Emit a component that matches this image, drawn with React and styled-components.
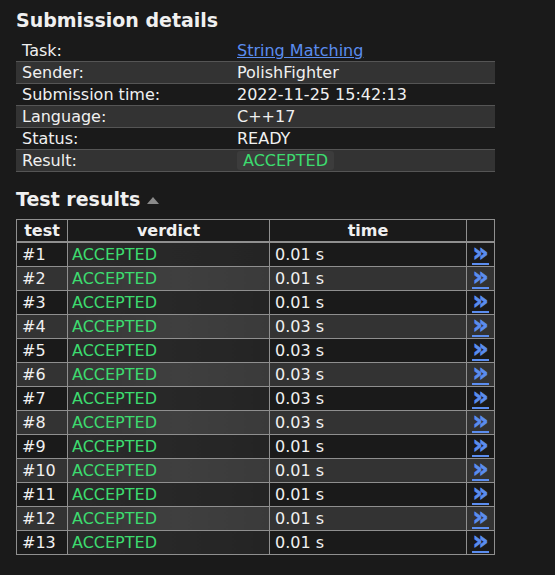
import React from "react";
import styled, { createGlobalStyle } from "styled-components";

const GlobalStyle = createGlobalStyle`
  html, body {
    margin: 0;
    background: #1a1a1a;
    color: #f0f0f0;
    font-family: "DejaVu Sans", Verdana, sans-serif;
    font-size: 16px;
  }
`;

const Page = styled.div`
  padding: 8px 16px 0 16px;
  height: 575px;
  overflow: hidden;
  box-sizing: border-box;
`;

const Heading = styled.h3`
  font-size: 19px;
  font-weight: bold;
  margin: 0 0 8px 0;
  line-height: 24px;
  display: flex;
  align-items: center;
  gap: 7px;
`;

const Arrow = styled.span`
  width: 0;
  height: 0;
  border-left: 6px solid transparent;
  border-right: 6px solid transparent;
  border-bottom: 7px solid #8a8a8a;
  margin-top: 2px;
`;

const DetailsTable = styled.table`
  width: 479px;
  border-collapse: collapse;
  margin-bottom: 15px;
`;

const DetailRow = styled.tr`
  background: ${(p) => (p.$even ? "#333333" : "transparent")};
  border-bottom: 1px solid #555555;
`;

const DetailCell = styled.td`
  padding: 0 6px;
  height: 21px;
  line-height: 21px;
  width: ${(p) => p.$w || "auto"};
`;

const TaskLink = styled.a`
  color: #5b8def;
  text-decoration: underline;
`;

const Badge = styled.span`
  display: inline-block;
  background: #3c3c3c;
  color: #3ddc6f;
  border-radius: 3px;
  padding: 0 6px;
  line-height: 19px;
`;

const ResultsTable = styled.table`
  width: 479px;
  border-collapse: collapse;
  border: 1px solid #8f8f8f;
  margin-bottom: 19px;
`;

const HeadCell = styled.th`
  border: 1px solid #8f8f8f;
  border-bottom: 2px solid #8f8f8f;
  height: 21px;
  line-height: 21px;
  padding: 0;
  font-weight: bold;
  text-align: center;
  width: ${(p) => p.$w || "auto"};
`;

const Row = styled.tr`
  background: ${(p) => (p.$even ? "#333333" : "transparent")};
`;

const Cell = styled.td`
  border: 1px solid #8f8f8f;
  height: 23px;
  line-height: 23px;
  padding: 0 0 0 5px;
  box-sizing: border-box;
  text-align: ${(p) => (p.$center ? "center" : "left")};
`;

const VerdictCell = styled(Cell)`
  color: #3ddc6f;
  padding-left: 4px;
  background: ${(p) =>
    p.$even
      ? "linear-gradient(90deg, #363636 0%, #3f3f3f 55%, #3a3a3a 100%)"
      : "linear-gradient(90deg, #2a2a2a 0%, #272727 60%, #242424 100%)"};
`;

const LinkCell = styled(Cell)`
  padding: 0;
  text-align: center;
`;

const DetailLink = styled.a`
  display: inline-block;
  height: 19px;
  line-height: 17px;
  vertical-align: middle;
  color: #5b8def;
  font-weight: bold;
  font-size: 25px;
  -webkit-text-stroke: 0.7px #5b8def;
  border-bottom: 2px solid #5b8def;
  text-decoration: none;
  margin-top: -2px;
`;

const details = [
  ["Task:", <TaskLink href="#">String Matching</TaskLink>],
  ["Sender:", "PolishFighter"],
  ["Submission time:", "2022-11-25 15:42:13"],
  ["Language:", "C++17"],
  ["Status:", "READY"],
  ["Result:", <Badge>ACCEPTED</Badge>],
];

const times = ["0.01", "0.01", "0.01", "0.03", "0.03", "0.03", "0.03", "0.03", "0.01", "0.01", "0.01", "0.01", "0.01"];

export default function App() {
  return (
    <>
      <GlobalStyle />
      <Page>
        <Heading>Submission details</Heading>
        <DetailsTable>
          <tbody>
            {details.map(([label, value], i) => (
              <DetailRow key={label} $even={i % 2 === 1}>
                <DetailCell $w="203px">{label}</DetailCell>
                <DetailCell>{value}</DetailCell>
              </DetailRow>
            ))}
          </tbody>
        </DetailsTable>

        <Heading>
          Test results <Arrow />
        </Heading>
        <ResultsTable>
          <thead>
            <tr>
              <HeadCell $w="50px">test</HeadCell>
              <HeadCell $w="201px">verdict</HeadCell>
              <HeadCell $w="196px">time</HeadCell>
              <HeadCell></HeadCell>
            </tr>
          </thead>
          <tbody>
            {times.map((t, i) => (
              <Row key={i} $even={i % 2 === 1}>
                <Cell>#{i + 1}</Cell>
                <VerdictCell $even={i % 2 === 1}>ACCEPTED</VerdictCell>
                <Cell>{t} s</Cell>
                <LinkCell>
                  <DetailLink href="#">»</DetailLink>
                </LinkCell>
              </Row>
            ))}
          </tbody>
        </ResultsTable>

        <Heading>Compiler report</Heading>
      </Page>
    </>
  );
}
